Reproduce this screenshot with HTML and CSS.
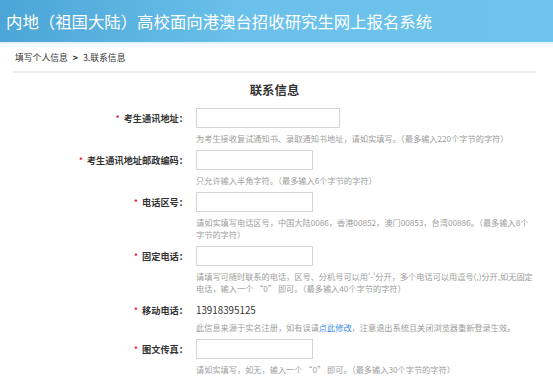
FILE: index.html
```html
<!DOCTYPE html>
<html lang="zh-CN">
<head>
    <meta charset="UTF-8">
    <title>联系信息</title>
    <link rel="stylesheet" href="styles.css">
</head>
<body>
    <div class="header">内地（祖国大陆）高校面向港澳台招收研究生网上报名系统</div>
    <div class="main">
        <div class="crumb">填写个人信息 <span class="arrow">&gt;</span> 3.联系信息</div>
        <div class="section-title">联系信息</div>
        <div class="form">
            <div class="row">
                <label><span class="req">*</span>考生通讯地址：</label>
                <div class="field">
                    <input type="text" class="wide">
                    <div class="hint">为考生接收复试通知书、录取通知书地址，请如实填写。（最多输入220个字节的字符）</div>
                </div>
            </div>
            <div class="row">
                <label><span class="req">*</span>考生通讯地址邮政编码：</label>
                <div class="field">
                    <input type="text">
                    <div class="hint">只允许输入半角字符。（最多输入6个字节的字符）</div>
                </div>
            </div>
            <div class="row">
                <label><span class="req">*</span>电话区号：</label>
                <div class="field">
                    <input type="text">
                    <div class="hint">请如实填写电话区号，中国大陆0086，香港00852，澳门00853，台湾00886。（最多输入8个<br>字节的字符）</div>
                </div>
            </div>
            <div class="row">
                <label><span class="req">*</span>固定电话：</label>
                <div class="field">
                    <input type="text">
                    <div class="hint">请填写可随时联系的电话，区号、分机号可以用'-'分开，多个电话可以用逗号(,)分开,如无固定<br>电话，输入一个 “0” 即可。（最多输入40个字节的字符）</div>
                </div>
            </div>
            <div class="row">
                <label><span class="req">*</span>移动电话：</label>
                <div class="field">
                    <div class="value">13918395125</div>
                    <div class="hint tight">此信息来源于实名注册，如有误请<a href="#">点此修改</a>，注意退出系统且关闭浏览器重新登录生效。</div>
                </div>
            </div>
            <div class="row">
                <label><span class="req">*</span>图文传真：</label>
                <div class="field">
                    <input type="text">
                    <div class="hint">请如实填写，如无，输入一个 “0” 即可。（最多输入30个字节的字符）</div>
                </div>
            </div>
        </div>
    </div>
</body>
</html>
```

FILE: styles.css
```css
body {
    margin: 0;
    font-family: "Noto Sans CJK SC", sans-serif;
    background: #fff;
    color: #333;
}
.header {
    height: 42px;
    line-height: 42px;
    padding-left: 6px;
    font-size: 16.4px;
    color: #fff;
    background: linear-gradient(to right, #4ba5d6, #6bc1eb 45%, #6ec3ec);
    border-bottom: 2px solid #e6f3fa;
    box-sizing: content-box;
}
.main {
    margin: 0 17px 0 13px;
}
.crumb {
    height: 27px;
    line-height: 27px;
    padding-left: 2px;
    font-size: 8.8px;
    color: #333;
    border-bottom: 2px solid #ececf1;
}
.crumb .arrow {
    font-weight: bold;
    margin: 0 3px;
}
.section-title {
    margin-top: 7px;
    margin-bottom: 8px;
    line-height: 20px;
    text-align: center;
    font-size: 12.4px;
    font-weight: bold;
    color: #333;
}
.row {
    display: grid;
    grid-template-columns: 175px 1fr;
    column-gap: 8px;
    margin-bottom: 6px;
}
.row label {
    height: 20px;
    line-height: 20px;
    text-align: right;
    font-size: 9.2px;
    font-weight: bold;
    color: #333;
}
.req {
    color: #e60012;
    font-weight: normal;
    margin-right: 4px;
}
input {
    display: block;
    width: 117px;
    height: 20px;
    margin: 0;
    padding: 0 4px;
    border: 1px solid #d4d4d4;
    box-sizing: border-box;
    background: #fff;
}
input.wide {
    width: 144px;
}
.value {
    height: 20px;
    line-height: 20px;
    font-size: 9.8px;
    color: #333;
}
.hint {
    margin-top: 4px;
    line-height: 12px;
    font-size: 8.2px;
    color: #9d9d9d;
    white-space: nowrap;
}
.hint.tight {
    margin-top: 1px;
}
.hint a {
    color: #3a8ee6;
    text-decoration: none;
}
```
